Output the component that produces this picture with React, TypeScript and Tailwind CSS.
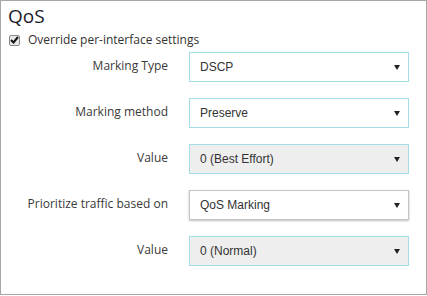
import React from "react";

const Arrow = () => (
  <svg width="6" height="5" viewBox="0 0 6 5" className="shrink-0">
    <polygon points="0,0 6,0 3,5" fill="#222" />
  </svg>
);

type RowProps = {
  label: string;
  value: string;
  disabled?: boolean;
  plain?: boolean;
};

const Row = ({ label, value, disabled, plain }: RowProps) => (
  <div className="flex items-center h-[30px]">
    <div className="w-[167px] text-right text-[12px] text-[#3a3a3a] -mt-[2px]" style={{ fontFamily: '"Open Sans", sans-serif' }}>
      {label}
    </div>
    <div
      className={
        "ml-[21px] w-[220px] h-[30px] flex items-center justify-between pl-[10px] pr-[8px] border text-[12px] text-[#333] " +
        (plain
          ? "border-[#c4c4c4] shadow-[0_1px_2px_rgba(0,0,0,0.25)] bg-white"
          : "border-[#a3dde8] ") +
        (disabled ? "bg-[#eeeeee]" : plain ? "" : "bg-white")
      }
      style={{ fontFamily: '"Liberation Sans", Arial, sans-serif' }}
    >
      <span>{value}</span>
      <Arrow />
    </div>
  </div>
);

export default function App() {
  return (
    <div className="w-[427px] h-[296px] bg-white">
      <div
        className="w-[427px] h-[295px] border border-[#a6a6a6] bg-white pt-[3px]"
        style={{ fontFamily: '"Open Sans", sans-serif' }}
      >
        <div className="pl-[7px] text-[19px] leading-[24px] text-[#1a1a2a]">QoS</div>
        <div className="flex items-center pl-[8px] mt-[3px] h-[18px]">
          <span className="w-[11px] h-[11px] border border-[#8a8a8a] bg-[#e8e8e8] rounded-[2px] flex items-center justify-center">
            <svg width="9" height="8" viewBox="0 0 9 8">
              <polyline points="1,4 3.5,6.5 8,1" fill="none" stroke="#111" strokeWidth="2" />
            </svg>
          </span>
          <span className="ml-[8px] text-[12px] text-[#333]">Override per-interface settings</span>
        </div>
        <div className="flex flex-col gap-[16px] mt-[3px]">
          <Row label="Marking Type" value="DSCP" />
          <Row label="Marking method" value="Preserve" />
          <Row label="Value" value="0 (Best Effort)" disabled />
          <Row label="Prioritize traffic based on" value="QoS Marking" plain />
          <Row label="Value" value="0 (Normal)" disabled />
        </div>
      </div>
    </div>
  );
}
